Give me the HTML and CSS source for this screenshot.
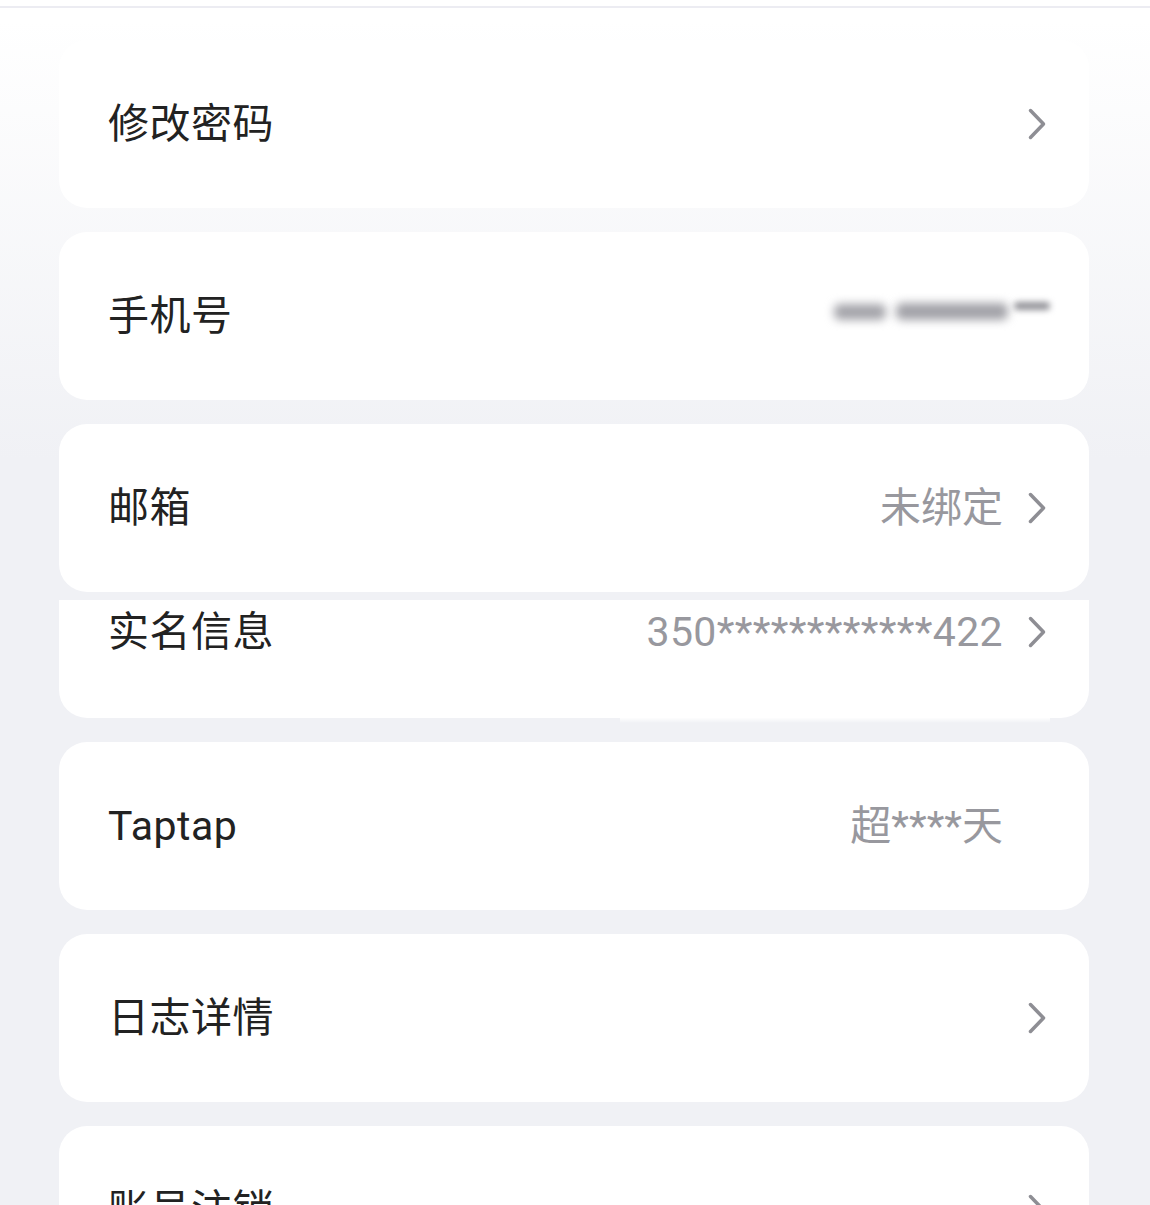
FILE: index.html
```html
<!DOCTYPE html>
<html lang="zh-CN">
<head>
    <meta charset="UTF-8">
    <meta name="viewport" content="width=device-width, initial-scale=1.0">
    <title>账号与安全</title>
    <link rel="stylesheet" href="styles.css">
</head>
<body>

<div class="top-line"></div>

<div class="settings-list">
    <div class="setting-card">
        <span class="label">修改密码</span>
        <div class="right">
            <svg class="chevron" viewBox="0 0 18 32"><path d="M2.5 2.5 L15.5 16 L2.5 29.5"/></svg>
        </div>
    </div>

    <div class="setting-card">
        <span class="label">手机号</span>
        <div class="right phone-masked">
            <span class="blur-bar bar-a"></span>
            <span class="blur-bar bar-b"></span>
            <span class="blur-bar bar-c"></span>
        </div>
    </div>

    <div class="setting-card">
        <span class="label">邮箱</span>
        <div class="right">
            <span class="value">未绑定</span>
            <svg class="chevron" viewBox="0 0 18 32"><path d="M2.5 2.5 L15.5 16 L2.5 29.5"/></svg>
        </div>
    </div>

    <div class="setting-card cut-top">
        <span class="label">实名信息</span>
        <div class="right">
            <span class="value id-number">350************422</span>
            <svg class="chevron" viewBox="0 0 18 32"><path d="M2.5 2.5 L15.5 16 L2.5 29.5"/></svg>
        </div>
    </div>

    <div class="setting-card">
        <span class="label">Taptap</span>
        <div class="right">
            <span class="value">超****天</span>
            <svg class="chevron hidden" viewBox="0 0 18 32"><path d="M2.5 2.5 L15.5 16 L2.5 29.5"/></svg>
        </div>
    </div>

    <div class="setting-card">
        <span class="label">日志详情</span>
        <div class="right">
            <svg class="chevron" viewBox="0 0 18 32"><path d="M2.5 2.5 L15.5 16 L2.5 29.5"/></svg>
        </div>
    </div>

    <div class="setting-card">
        <span class="label">账号注销</span>
        <div class="right">
            <svg class="chevron" viewBox="0 0 18 32"><path d="M2.5 2.5 L15.5 16 L2.5 29.5"/></svg>
        </div>
    </div>
</div>

</body>
</html>
```

FILE: styles.css
```css
html, body {
    height: 100%;
}

body {
    font-family: Roboto, "Noto Sans CJK SC", sans-serif;
    margin: 0;
    padding: 6px 0 0;
    overflow: hidden;
    background: linear-gradient(to bottom, #ffffff 0, #ffffff 20px, #f0f1f5 460px, #f0f1f5 100%);
}

.top-line {
    height: 2px;
    background-color: #ececf2;
}

.settings-list {
    display: flex;
    flex-direction: column;
    gap: 24px;
    padding: 32px 61px 0 59px;
}

.setting-card {
    position: relative;
    display: flex;
    justify-content: space-between;
    align-items: center;
    height: 168px;
    flex-shrink: 0;
    box-sizing: border-box;
    padding: 0 43px 0 49px;
    background-color: white;
    border-radius: 28px;
}

/* card whose upper part got clipped away by the scroll */
.setting-card.cut-top {
    height: 118px;
    margin-top: -16px;
    align-items: flex-start;
    padding-top: 8px;
    border-radius: 0 0 28px 28px;
}

.setting-card.cut-top::after {
    content: "";
    position: absolute;
    left: 561px;
    right: 39px;
    top: 100%;
    height: 5px;
    background: linear-gradient(to bottom, rgba(255, 255, 255, 0.9), rgba(255, 255, 255, 0));
}

.label {
    font-size: 41px;
    color: #222222;
    line-height: 48px;
    letter-spacing: 0.5px;
}

.right {
    display: flex;
    align-items: center;
    gap: 25px;
}

.value {
    font-size: 41px;
    color: #98989e;
    line-height: 48px;
}

.id-number {
    letter-spacing: 0.35px;
}

.chevron {
    width: 18px;
    height: 32px;
    fill: none;
    stroke: #8e8e94;
    stroke-width: 3.5;
    stroke-linecap: round;
    stroke-linejoin: round;
}

.chevron.hidden {
    visibility: hidden;
}

/* masked phone number */
.phone-masked {
    gap: 0;
    position: relative;
    width: 220px;
    height: 40px;
    margin-right: -4px;
    top: -4px;
}

.blur-bar {
    position: absolute;
    display: block;
    border-radius: 6px;
    filter: blur(5px);
}

.bar-a {
    left: 4px;
    top: 12px;
    width: 52px;
    height: 16px;
    background-color: #a4a4aa;
}

.bar-b {
    left: 66px;
    top: 11px;
    width: 112px;
    height: 17px;
    background-color: #a2a2a8;
}

.bar-c {
    left: 184px;
    top: 10px;
    width: 36px;
    height: 8px;
    background-color: #909096;
    filter: blur(3px);
}
```
